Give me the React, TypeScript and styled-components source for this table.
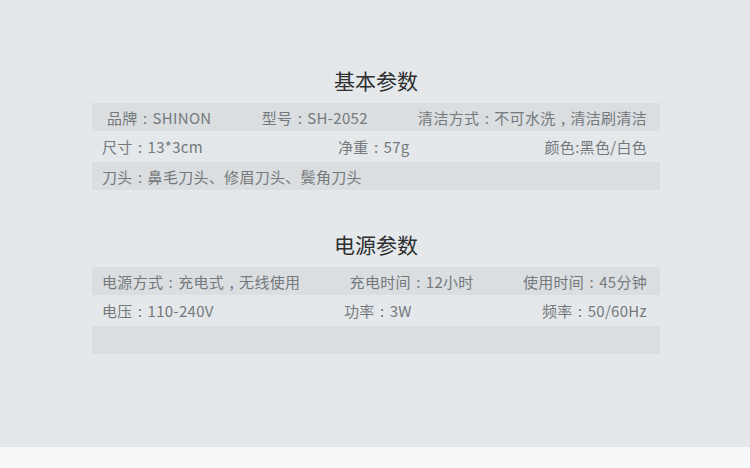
import styled, { createGlobalStyle } from 'styled-components';

const GlobalStyle = createGlobalStyle`
  html, body {
    margin: 0;
    padding: 0;
    background: #f7f8fa;
  }
  body {
    font-family: "Noto Sans CJK SC", "Noto Sans", sans-serif;
  }
`;

const Page = styled.div`
  height: 447px;
  background: #e4e8eb;
  padding-top: 67px;
  box-sizing: border-box;
`;

const Section = styled.section`
  width: 568px;
  margin: 0 0 41px 92px;
`;

const Title = styled.h2`
  margin: -2px 0 8px;
  height: 30px;
  line-height: 30px;
  text-align: center;
  font-size: 21px;
  font-weight: 400;
  color: #2e2e2e;
`;

const Row = styled.div<{ $shaded?: boolean; $height: number; $indent?: number }>`
  display: flex;
  justify-content: space-between;
  align-items: center;
  height: ${(p) => p.$height}px;
  padding: 0 13px 0 ${(p) => p.$indent ?? 10}px;
  background: ${(p) => (p.$shaded ? '#dadee1' : 'transparent')};
  font-size: 15px;
  letter-spacing: 0.3px;
  color: #75797c;
  white-space: nowrap;
`;

const Cell = styled.span``;

// full-width colon / comma drawn centred in their em box
const Punct = styled.span`
  display: inline-block;
  width: 1em;
  text-align: center;
  letter-spacing: 0;
`;

interface Spec {
  items: string[];
  indent?: number;
}

const basic: Spec[] = [
  { items: ['品牌：SHINON', '型号：SH-2052', '清洁方式：不可水洗，清洁刷清洁'], indent: 15 },
  { items: ['尺寸：13*3cm', '净重：57g', '颜色:黑色/白色'] },
  { items: ['刀头：鼻毛刀头、修眉刀头、鬓角刀头'] },
];

const power: Spec[] = [
  { items: ['电源方式：充电式，无线使用', '充电时间：12小时', '使用时间：45分钟'] },
  { items: ['电压：110-240V', '功率：3W', '频率：50/60Hz'] },
  { items: [] },
];

const heights = [28, 31, 28];

const renderText = (text: string) =>
  text.split(/([：，])/).map((part, i) =>
    part === '：' ? <Punct key={i}>:</Punct> : part === '，' ? <Punct key={i}>,</Punct> : part
  );

const SpecTable = ({ title, rows }: { title: string; rows: Spec[] }) => (
  <Section>
    <Title>{title}</Title>
    {rows.map((row, i) => (
      <Row key={i} $shaded={i % 2 === 0} $height={heights[i]} $indent={row.indent}>
        {row.items.map((item) => (
          <Cell key={item}>{renderText(item)}</Cell>
        ))}
      </Row>
    ))}
  </Section>
);

export default function App() {
  return (
    <>
      <GlobalStyle />
      <Page>
        <SpecTable title="基本参数" rows={basic} />
        <SpecTable title="电源参数" rows={power} />
      </Page>
    </>
  );
}
